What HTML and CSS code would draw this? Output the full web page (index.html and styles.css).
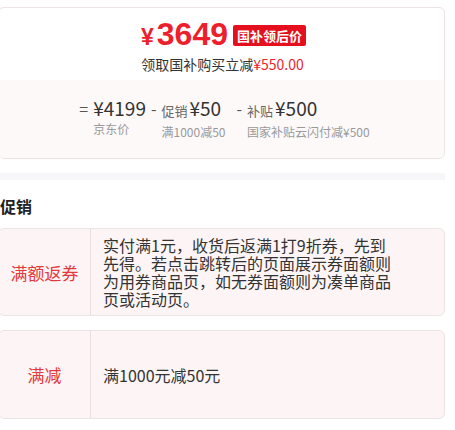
FILE: index.html
```html
<!DOCTYPE html>
<html lang="zh-CN">
<head>
  <meta charset="UTF-8" />
  <meta name="viewport" content="width=device-width, initial-scale=1.0"/>
  <title>价格与促销</title>
  <link rel="stylesheet" href="styles.css">
</head>
<body>
  <div class="page">

    <!-- 价格卡片 -->
    <div class="price-card">
      <div class="price-top">
        <div class="price-line">
          <span class="price"><span class="yen">¥</span>3649</span>
          <span class="badge">国补领后价</span>
        </div>
        <div class="price-sub">领取国补购买立减<span class="red">¥550.00</span></div>
      </div>

      <div class="price-calc">
        <span class="op">=</span>
        <div class="calc-col">
          <div class="calc-val">¥4199</div>
          <div class="calc-label">京东价</div>
        </div>
        <span class="op">-</span>
        <div class="calc-col">
          <div class="calc-val"><span class="calc-name">促销</span>¥50</div>
          <div class="calc-label">满1000减50</div>
        </div>
        <span class="op op-wide">-</span>
        <div class="calc-col">
          <div class="calc-val"><span class="calc-name">补贴</span>¥500</div>
          <div class="calc-label">国家补贴云闪付减¥500</div>
        </div>
      </div>
    </div>

    <div class="divider"></div>

    <!-- 促销 -->
    <h2 class="section-title">促销</h2>

    <div class="promo">
      <div class="promo-tag">满额返券</div>
      <div class="promo-text">
        <p>实付满1元，收货后返满1打9折券，先到先得。若点击跳转后的页面展示券面额则为用券商品页，如无券面额则为凑单商品页或活动页。</p>
      </div>
    </div>

    <div class="promo promo-tall">
      <div class="promo-tag">满减</div>
      <div class="promo-text">
        <p>满1000元减50元</p>
      </div>
    </div>

  </div>
</body>
</html>
```

FILE: styles.css
```css
:root {
  --red: #ee1f2d;
  --badge-red: #e4101e;
  --text: #333333;
  --muted: #999999;
  --border: #ece4e4;
  --pink-bg: #fdf5f5;
}

* {
  box-sizing: border-box;
}

body {
  margin: 0;
  background: #ffffff;
  color: var(--text);
  font-family: "Noto Sans CJK SC", "Noto Sans", sans-serif;
}

.page {
  width: 447px;
  margin-left: -2px;
  padding-top: 7px;
}

/* 价格卡片 */
.price-card {
  border: 1px solid var(--border);
  border-radius: 6px;
  overflow: hidden;
}

.price-top {
  padding: 11px 0 7px;
  display: flex;
  flex-direction: column;
  align-items: center;
}

.price-line {
  display: flex;
  align-items: center;
  height: 33px;
  margin-left: 4px;
}

.price {
  color: var(--red);
  font-family: "Liberation Sans", "Noto Sans CJK SC", sans-serif;
  font-size: 32px;
  font-weight: 700;
  line-height: 33px;
}

.price .yen {
  font-size: 23px;
  margin-right: 3px;
}

.badge {
  margin-left: 5px;
  padding: 0 4px;
  height: 21px;
  line-height: 21px;
  background: var(--badge-red);
  color: #fff;
  font-size: 13px;
  font-weight: 700;
  border-radius: 2px;
}

.price-sub {
  margin: 3px 0 0 2px;
  font-size: 14px;
  line-height: 18px;
  color: var(--text);
}

.red {
  color: var(--red);
}

.price-calc {
  background: #fdf9f9;
  padding: 16px 0 17px 6px;
  display: flex;
  justify-content: center;
  align-items: flex-start;
  gap: 5px;
}

.op {
  font-size: 16px;
  line-height: 24px;
  color: #555;
}

.op-wide {
  margin-left: 6px;
}

.calc-col {
  display: flex;
  flex-direction: column;
}

.calc-val {
  font-size: 19px;
  line-height: 24px;
  color: #333;
}

.calc-name {
  font-size: 13px;
  color: #666;
  margin-right: 2px;
}

.calc-label {
  font-size: 12px;
  line-height: 18px;
  color: var(--muted);
}

.divider {
  height: 7px;
  margin-top: 14px;
  background: #f7f7fa;
}

.section-title {
  margin: 15px 0 11px 2px;
  font-size: 16px;
  font-weight: 700;
  line-height: 22px;
  color: #222;
}

/* 促销条目 */
.promo {
  display: flex;
  background: var(--pink-bg);
  border: 1px solid var(--border);
  border-radius: 6px;
  margin-bottom: 14px;
}

.promo-tall {
  min-height: 89px;
}

.promo-tag {
  flex: 0 0 92px;
  display: flex;
  align-items: center;
  justify-content: center;
  border-right: 1px solid #eadfdf;
  color: #e4393c;
  font-size: 17px;
}

.promo-text {
  flex: 1;
  display: flex;
  align-items: center;
  padding: 7px 0 7px 12px;
}

.promo-text p {
  margin: 0;
  max-width: 293px;
  font-size: 16px;
  line-height: 18px;
  color: #333;
}
```
